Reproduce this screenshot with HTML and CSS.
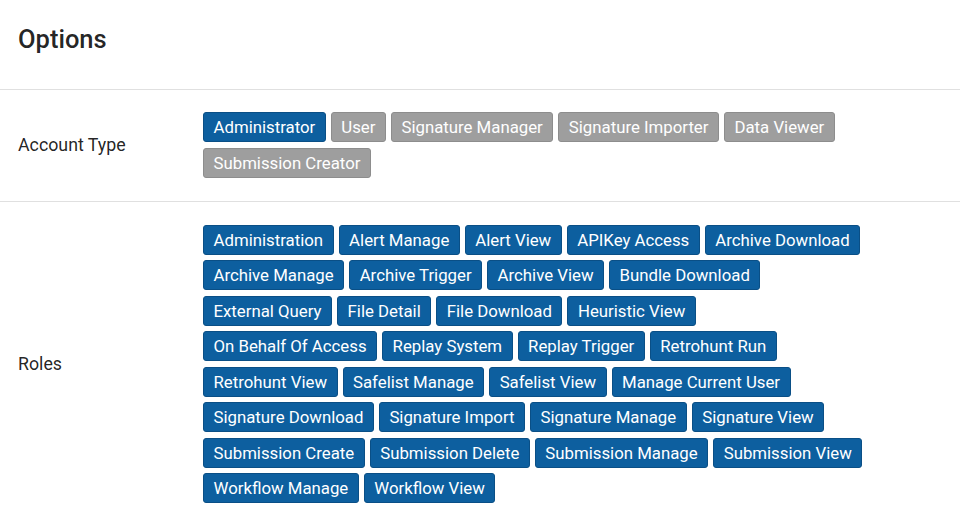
FILE: index.html
```html
<!DOCTYPE html>
<html>
<head>
<meta charset="utf-8">
<link rel="stylesheet" href="styles.css">
</head>
<body>
<div class="page">
  <header class="header"><h1 class="title">Options</h1></header>
  <section class="row">
    <div class="label">Account Type</div>
    <div class="chips">
      <span class="chip on">Administrator</span>
      <span class="chip off">User</span>
      <span class="chip off">Signature Manager</span>
      <span class="chip off">Signature Importer</span>
      <span class="chip off">Data Viewer</span>
      <span class="chip off">Submission Creator</span>
    </div>
  </section>
  <section class="row last">
    <div class="label">Roles</div>
    <div class="chips">
      <span class="chip on">Administration</span>
      <span class="chip on">Alert Manage</span>
      <span class="chip on">Alert View</span>
      <span class="chip on">APIKey Access</span>
      <span class="chip on">Archive Download</span>
      <span class="chip on">Archive Manage</span>
      <span class="chip on">Archive Trigger</span>
      <span class="chip on">Archive View</span>
      <span class="chip on">Bundle Download</span>
      <span class="chip on">External Query</span>
      <span class="chip on">File Detail</span>
      <span class="chip on">File Download</span>
      <span class="chip on">Heuristic View</span>
      <span class="chip on">On Behalf Of Access</span>
      <span class="chip on">Replay System</span>
      <span class="chip on">Replay Trigger</span>
      <span class="chip on">Retrohunt Run</span>
      <span class="chip on">Retrohunt View</span>
      <span class="chip on">Safelist Manage</span>
      <span class="chip on">Safelist View</span>
      <span class="chip on">Manage Current User</span>
      <span class="chip on">Signature Download</span>
      <span class="chip on">Signature Import</span>
      <span class="chip on">Signature Manage</span>
      <span class="chip on">Signature View</span>
      <span class="chip on">Submission Create</span>
      <span class="chip on">Submission Delete</span>
      <span class="chip on">Submission Manage</span>
      <span class="chip on">Submission View</span>
      <span class="chip on">Workflow Manage</span>
      <span class="chip on">Workflow View</span>
    </div>
  </section>
</div>
</body>
</html>
```

FILE: styles.css
```css
html, body {
  margin: 0;
  padding: 0;
  background: #ffffff;
}
body {
  font-family: Roboto, "Liberation Sans", Arial, sans-serif;
  color: rgba(0, 0, 0, 0.87);
}
.page {
  width: 960px;
}
.header {
  box-sizing: border-box;
  height: 90px;
  border-bottom: 1px solid #e0e0e0;
  display: flex;
  align-items: center;
  padding-left: 18px;
}
.title {
  margin: 0;
  font-size: 25.5px;
  font-weight: 500;
  line-height: 1;
  padding-bottom: 10px;
}
.row {
  display: grid;
  grid-template-columns: 203px 1fr;
  align-items: center;
  padding: 22px 90px 23px 0;
  border-bottom: 1px solid #e0e0e0;
}
.row.last {
  border-bottom: none;
  padding-top: 23px;
}
.label {
  padding-left: 18px;
  font-size: 17.8px;
}
.chips {
  display: flex;
  flex-wrap: wrap;
  gap: 5.5px 5px;
}
.chip {
  box-sizing: border-box;
  height: 30px;
  padding: 0 9.5px;
  display: inline-flex;
  align-items: center;
  font-size: 16.8px;
  color: #ffffff;
  border-radius: 3px;
  border: 1px solid;
}
.chip.on {
  background: #0d5f9f;
  border-color: #0a4f86;
}
.chip.off {
  background: #9e9e9e;
  border-color: #8d8d8d;
}
```
